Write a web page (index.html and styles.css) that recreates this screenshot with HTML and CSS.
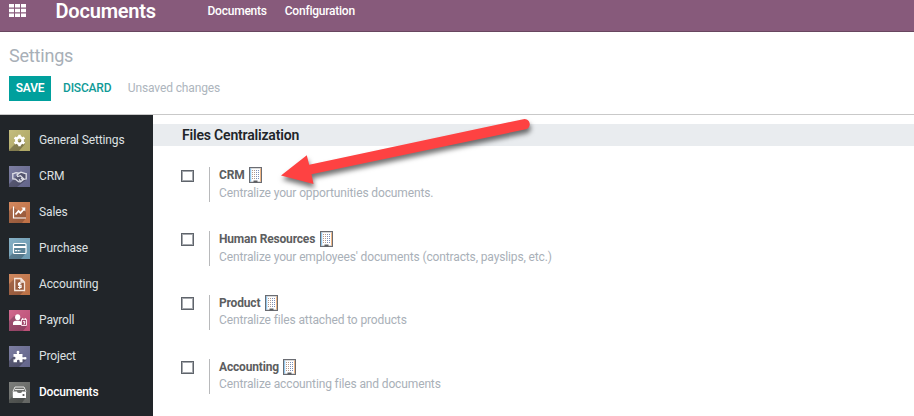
FILE: index.html
```
<!DOCTYPE html>
<html lang="en">
<head>
<meta charset="utf-8">
<title>Settings</title>
<link rel="stylesheet" href="styles.css">
</head>
<body>
<svg class="defs" width="0" height="0">
  <defs>
    <linearGradient id="shine" x1="0" y1="0" x2="1" y2="1"><stop offset="0" stop-color="#fff" stop-opacity=".12"/><stop offset="1" stop-color="#000" stop-opacity=".08"/></linearGradient>
    <symbol id="building" viewBox="0 0 13 16">
      <path d="M.6.6h11.8v14.8H.6z" fill="#fff" stroke="#6a6c72" stroke-width="1.200"/>
      <path d="M1.700 1.500v13" stroke="#7fc0f0" stroke-width="1"/><path d="M11.500 1.500v13" stroke="#f0b684" stroke-width="1"/>
      <path d="M3 3.500h3.500M3 5.500h3.500M3 7.500h3.500M3 9.500h3.500M3 11.500h3.500" stroke="#b59a8c" stroke-width="1" stroke-dasharray="1 1"/><path d="M7 3.500h3.500M7 5.500h3.500M7 7.500h3.500M7 9.500h3.500M7 11.500h3.500" stroke="#7d8fb8" stroke-width="1" stroke-dasharray="1 1"/>
      <path d="M4.500 13.500h4v2h-4z" fill="#5b5c60"/>
    </symbol>
  </defs>
</svg>
<header class="navbar">
  <svg class="apps" width="17" height="13" viewBox="0 0 17 13"><path fill="#fff" d="M0 0h5v3.600H0zM6 0h5v3.600H6zM12 0h5v3.600h-5zM0 4.700h5v3.600H0zM6 4.700h5v3.600H6zM12 4.700h5v3.600h-5zM0 9.400h5V13H0zM6 9.400h5V13H6zM12 9.400h5V13h-5z"/></svg>
  <span class="brand">Documents</span>
  <nav class="menu"><a>Documents</a><a>Configuration</a></nav>
</header>
<section class="panel">
  <h1>Settings</h1>
  <div class="actions"><button class="save">SAVE</button><button class="discard">DISCARD</button><span class="status">Unsaved changes</span></div>
</section>
<div class="layout">
  <aside class="sidebar">
    <a class="tab"><svg class="icon" viewBox="0 0 21 21"><path fill="#bdb56d" d="M0 0h21v21H0z"/><path fill="#746e43" opacity=".75" d="M6.500 13.500 0 20v1h10l6-7-1.500-6z"/><path fill="url(#shine)" d="M0 0h21v21H0z"/><circle cx="10.500" cy="10.500" r="3.200" fill="none" stroke="#fff" stroke-width="2.600"/><path stroke="#fff" stroke-width="2.600" d="M10.500 4.700v2M10.500 14.300v2M5.500 7.600l1.700 1M13.800 12.400l1.700 1M5.500 13.400l1.700-1M13.800 8.600l1.700-1"/></svg>General Settings</a>
    <a class="tab"><svg class="icon" viewBox="0 0 21 21"><path fill="#6c6e96" d="M0 0h21v21H0z"/><path fill="#45475f" opacity=".75" d="M4 14l-4 4v3h8l9-7V8l-6-2z"/><path fill="url(#shine)" d="M0 0h21v21H0z"/><path fill="none" stroke="#dedfe7" stroke-width="1.300" d="M3.800 7v6.500M17.200 7v6.500M4.500 7.600 7 6.600l3 .6 2-1 4.500 1.400M4.500 13l2 .2 3 2.500 2 .2 3-2.500 2-.2M10.500 7 8 9l.7 1.500 2.800-.8 3.300 3.200M10 13.500l1.500 1.400M12 12l1.500 1.400"/></svg>CRM</a>
    <a class="tab"><svg class="icon" viewBox="0 0 21 21"><path fill="#cf7a4b" d="M0 0h21v21H0z"/><path fill="#854b31" opacity=".6" d="M4 5 0 9v12h13l4-5V6l-5 5z"/><path fill="url(#shine)" d="M0 0h21v21H0z"/><path fill="none" stroke="#fff" stroke-width="1.200" d="M4.500 4.500V16H17"/><path fill="none" stroke="#fff" stroke-width="1.800" d="m6.500 12.500 3-3.500 2 2 3.500-4"/><path fill="#fff" d="M12.300 5.500h4v4z"/></svg>Sales</a>
    <a class="tab"><svg class="icon" viewBox="0 0 21 21"><path fill="#76a7bf" d="M0 0h21v21H0z"/><path fill="#46677a" opacity=".65" d="M4 15l-4 4v2h12l5-6z"/><path fill="url(#shine)" d="M0 0h21v21H0z"/><rect x="4.500" y="5.500" width="12.500" height="10" rx="1" fill="#5c8498" stroke="#fff" stroke-width="1.200"/><path stroke="#fff" stroke-width="2" d="M4.500 9h12.500"/><path stroke="#fff" stroke-width="1.200" stroke-dasharray="2 .6" d="M6 12.700h5.500"/></svg>Purchase</a>
    <a class="tab"><svg class="icon" viewBox="0 0 21 21"><path fill="#cb7a4b" d="M0 0h21v21H0z"/><path fill="#854b31" opacity=".65" d="M5 5 0 10v11h11l5-5V7z"/><path fill="url(#shine)" d="M0 0h21v21H0z"/><path fill="none" stroke="#f4e5dc" stroke-width="1.300" d="M5.700 4.500H12L15.500 8v8.500H5.700zM12 4.500V8h3.500"/><path fill="none" stroke="#fff" stroke-width="1.100" d="M12.300 9.300H9.500v2h2.600v2.200H9M10.700 8v7"/></svg>Accounting</a>
    <a class="tab"><svg class="icon" viewBox="0 0 21 21"><path fill="#cb5680" d="M0 0h21v21H0z"/><path fill="#80395a" opacity=".65" d="M5 6 0 11v10h14l4-5-5-8z"/><path fill="url(#shine)" d="M0 0h21v21H0z"/><ellipse cx="8.700" cy="7.300" rx="2.600" ry="3" fill="#fff"/><path fill="#fff" d="M4 15v-2q0-2 3-2.300h3q2 .3 2 1V15z"/><path fill="#a04a6d" stroke="#f8dfe7" d="M12.500 9.300h5v6.200h-5z"/><path fill="none" stroke="#fff" d="M13.700 8v2M16.300 8v2M14 11.700h2l-1 2.800"/></svg>Payroll</a>
    <a class="tab"><svg class="icon" viewBox="0 0 21 21"><path fill="#6c6e96" d="M0 0h21v21H0z"/><path fill="#45475f" opacity=".75" d="M5 10 0 15v6h10l7-7-6-7z"/><path fill="url(#shine)" d="M0 0h21v21H0z"/><path fill="#fff" d="M4.500 8h3.700Q6.700 5 9 4.700 11.300 5 9.800 8h3.700v3.300h1.200q2.800-1 2.800.9t-2.800 1h-1.200v3.100h-3q.7-2.500-1.200-2.500t-1.200 2.500H4.500v-3q2 .6 2-1.200t-2-1.200z"/></svg>Project</a>
    <a class="tab active"><svg class="icon" viewBox="0 0 21 21"><path fill="#6c6e6b" d="M0 0h21v21H0z"/><path fill="#3e403e" opacity=".65" d="M4 14l-4 4v3h13l4-6V8z"/><path fill="url(#shine)" d="M0 0h21v21H0z"/><path fill="none" stroke="#e5e5e3" stroke-width="1" d="M4 9.500 6 5h9l2 4.500M6 7.500h9"/><path fill="#fff" d="M3.800 9.500h4q.5 1.500 2.700 1.500t2.700-1.500H17V16H3.800z"/><circle cx="14.500" cy="13" r="1.100" fill="#555"/></svg>Documents</a>
  </aside>
  <main class="content">
    <h2>Files Centralization</h2>
    <div class="settings">
      <div class="setting first"><span class="check"></span><div class="info"><div class="name"><span>CRM</span><svg class="bld"><use href="#building"/></svg></div><p>Centralize your opportunities documents.</p></div></div>
      <div class="setting"><span class="check"></span><div class="info"><div class="name"><span>Human Resources</span><svg class="bld"><use href="#building"/></svg></div><p>Centralize your employees' documents (contracts, payslips, etc.)</p></div></div>
      <div class="setting tight"><span class="check"></span><div class="info"><div class="name"><span>Product</span><svg class="bld"><use href="#building"/></svg></div><p>Centralize files attached to products</p></div></div>
      <div class="setting tight"><span class="check"></span><div class="info"><div class="name"><span>Accounting</span><svg class="bld"><use href="#building"/></svg></div><p>Centralize accounting files and documents</p></div></div>
    </div>
  </main>
</div>
<svg class="arrow" width="270" height="90" viewBox="270 105 270 90"><path fill="#fe4242" d="M281 175.500 306.800 155.300 309.200 164.700 523.300 119.200A5.200 5.200 0 0 1 525.800 129.300L311.500 174.200 313.500 184Z"/></svg>
</body>
</html>
```
FILE: styles.css
```
* { box-sizing: border-box; }
body { margin: 0; width: 914px; height: 416px; overflow: hidden; background: #fff; font: 12px/18px Roboto, sans-serif; letter-spacing: -.13px; color: #666; }
.defs { position: absolute; }
.navbar { height: 32px; display: flex; align-items: flex-start; background: #875a7b; border-bottom: 1px solid #68465f; color: #fff; }
.apps { margin: 4px 0 0 9px; }
.brand { width: 152px; margin-left: 29.500px; font-size: 20px; font-weight: 600; line-height: 23px; letter-spacing: -.2px; }
.menu { display: flex; gap: 18px; font-weight: 500; line-height: 22px; letter-spacing: -.23px; }
.panel { height: 83px; padding: 14px 9px 0; border-bottom: 1px solid #c9c9c9; }
h1 { margin: 0; font-size: 18px; font-weight: 400; line-height: 20px; letter-spacing: -.2px; color: #a8afb7; }
.actions { display: flex; align-items: center; margin-top: 10px; height: 25px; }
button { border: 0; padding: 0; font: 500 12px/25px Roboto, sans-serif; letter-spacing: -.2px; }
.save { width: 42px; height: 25px; background: #00a09d; color: #fff; font-weight: 600; }
.discard { margin-left: 12px; background: none; color: #109a97; }
.status { margin: -1px 0 0 16.500px; color: #adb5bd; }
.layout { display: flex; height: 301px; }
.sidebar { width: 153px; padding-top: 7px; background: #212529; }
.tab { display: flex; align-items: center; height: 36px; padding-left: 9px; color: #dee0e2; }
.icon { width: 21px; height: 21px; margin-right: 9px; }
.active { color: #fff; font-weight: 500; letter-spacing: -.22px; }
.content { flex: 1; padding-top: 9px; }
h2 { margin: 0; height: 22px; padding-left: 29px; background: #e9ecef; color: #212529; font-size: 14px; font-weight: 600; line-height: 22px; letter-spacing: -.18px; }
.settings { padding: 21px 0 0 28px; }
.setting { display: flex; height: 64px; }
.check { width: 13px; height: 13px; margin-top: 2px; border: 1px solid #5f646b; box-shadow: inset 0 0 0 1px #a6a9ae; background: #fff; }
.first .check { height: 12px; margin-top: 3px; }
.info { height: 35px; margin-left: 15px; padding-left: 9px; border-left: 1px solid #b8b9bb; }
.name { display: flex; height: 17px; color: #5c5d60; font-weight: 700; line-height: 16px; letter-spacing: -.17px; }
.bld { width: 13px; height: 16px; margin-left: 4.500px; }
p { margin: 0; color: #a9b0b8; white-space: nowrap; }
.tight p { margin-top: -1px; }
.arrow { position: absolute; left: 270px; top: 105px; filter: drop-shadow(1px 4px 2.500px rgba(0,0,0,.55)); }
```
